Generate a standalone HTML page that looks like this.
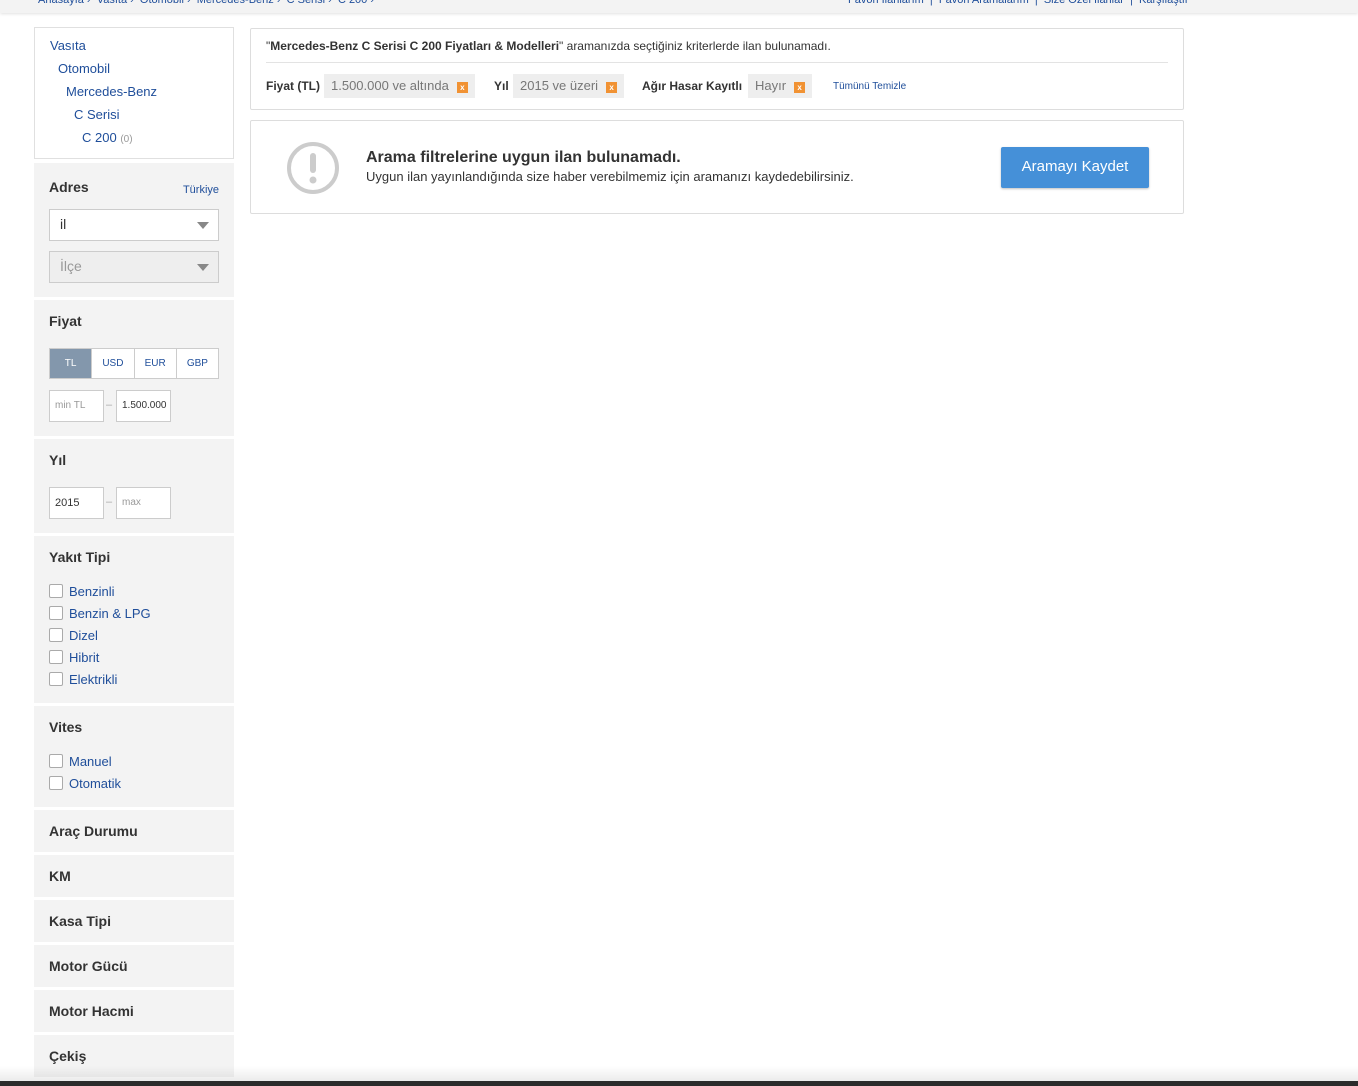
<!DOCTYPE html>
<html><head><meta charset="utf-8"><style>
*{box-sizing:border-box;margin:0;padding:0}
body{width:1358px;height:1086px;overflow:hidden;background:#fff;font-family:"Liberation Sans",sans-serif;position:relative;color:#333}
.abs{position:absolute}
a{color:#1f4e9a;text-decoration:none}
.top{left:0;top:0;width:1358px;height:13px;background:#f3f3f3;box-shadow:0 1px 3px rgba(0,0,0,.12)}
.top span{position:absolute;top:-6px;font-size:11px;color:#1f4e9a}
.cat{left:34px;top:27px;width:200px;height:132px;border:1px solid #e0e0e0;font-size:13px}
.cat a{position:absolute}
.sec{left:34px;width:200px;background:#f3f3f3}
.sec h3{position:absolute;left:15px;font-size:14px;font-weight:bold;color:#333}
.sel{position:absolute;left:15px;width:170px;height:32px;border:1px solid #ccc;background:#fff;font-size:14px;padding:6px 10px;color:#333}
.sel:after{content:"";position:absolute;right:9px;top:12px;border-left:6px solid transparent;border-right:6px solid transparent;border-top:7px solid #888}
.inp{position:absolute;width:55px;height:32px;border:1px solid #ccc;background:#fff;font-size:10px;padding:9px 5px;color:#999}
.cur{position:absolute;left:15px;top:48px;width:170px;height:31px;display:flex;border:1px solid #ccc;background:#fff}
.cur div{flex:1;text-align:center;font-size:10px;line-height:29px;color:#1f4e9a;border-left:1px solid #ccc}
.cur div:first-child{background:#8397ac;color:#fff;border:none}
.cb{position:absolute;left:15px;font-size:13px;color:#1f4e9a}
.cb i{display:inline-block;width:14px;height:14px;border:1px solid #aaa;background:#fff;border-radius:2px;vertical-align:-2px;margin-right:6px}
.box{left:250px;width:934px;border:1px solid #ddd;border-radius:2px}
.tag{position:absolute;top:45px;height:24px;background:#eee;font-size:13px;color:#777;padding:4px 7px;white-space:nowrap}
.x{display:inline-block;width:11px;height:11px;background:#f19233;color:#fff;font-size:8px;font-weight:bold;line-height:11px;text-align:center;margin-left:8px;vertical-align:0}
.lbl{position:absolute;top:50px;font-size:12px;font-weight:bold;color:#333;white-space:nowrap}
</style></head><body>
<div class="abs top">
<span style="left:38px">Anasayfa › &nbsp;Vasıta › &nbsp;Otomobil › &nbsp;Mercedes-Benz › &nbsp;C Serisi › &nbsp;C 200 ›</span>
<span style="left:848px">Favori İlanlarım &nbsp;| &nbsp;Favori Aramalarım &nbsp;| &nbsp;Size Özel İlanlar &nbsp;| &nbsp;Karşılaştır</span>
</div>

<div class="abs cat">
<a style="left:15px;top:10px">Vasıta</a>
<a style="left:23px;top:33px">Otomobil</a>
<a style="left:31px;top:56px">Mercedes-Benz</a>
<a style="left:39px;top:79px">C Serisi</a>
<a style="left:47px;top:102px">C 200 <span style="color:#999;font-size:10px">(0)</span></a>
</div>

<div class="abs sec" style="top:163px;height:134px">
<h3 style="top:16px">Adres</h3>
<a style="position:absolute;right:15px;top:21px;font-size:11px">Türkiye</a>
<div class="sel" style="top:46px">il</div>
<div class="sel" style="top:88px;background:#eee;color:#999">İlçe</div>
</div>

<div class="abs sec" style="top:300px;height:136px">
<h3 style="top:13px">Fiyat</h3>
<div class="cur"><div>TL</div><div>USD</div><div>EUR</div><div>GBP</div></div>
<div class="inp" style="left:15px;top:90px">min TL</div>
<span style="position:absolute;left:72px;top:99px;color:#aaa;font-size:11px">–</span>
<div class="inp" style="left:82px;top:90px;color:#333;padding:9px 5px">1.500.000</div>
</div>

<div class="abs sec" style="top:439px;height:94px">
<h3 style="top:13px">Yıl</h3>
<div class="inp" style="left:15px;top:48px;color:#333;font-size:11px">2015</div>
<span style="position:absolute;left:72px;top:57px;color:#aaa;font-size:11px">–</span>
<div class="inp" style="left:82px;top:48px">max</div>
</div>

<div class="abs sec" style="top:536px;height:167px">
<h3 style="top:13px">Yakıt Tipi</h3>
<div class="cb" style="top:48px"><i></i>Benzinli</div>
<div class="cb" style="top:70px"><i></i>Benzin &amp; LPG</div>
<div class="cb" style="top:92px"><i></i>Dizel</div>
<div class="cb" style="top:114px"><i></i>Hibrit</div>
<div class="cb" style="top:136px"><i></i>Elektrikli</div>
</div>

<div class="abs sec" style="top:706px;height:101px">
<h3 style="top:13px">Vites</h3>
<div class="cb" style="top:48px"><i></i>Manuel</div>
<div class="cb" style="top:70px"><i></i>Otomatik</div>
</div>

<div class="abs sec" style="top:810px;height:42px"><h3 style="top:13px">Araç Durumu</h3></div>
<div class="abs sec" style="top:855px;height:42px"><h3 style="top:13px">KM</h3></div>
<div class="abs sec" style="top:900px;height:42px"><h3 style="top:13px">Kasa Tipi</h3></div>
<div class="abs sec" style="top:945px;height:42px"><h3 style="top:13px">Motor Gücü</h3></div>
<div class="abs sec" style="top:990px;height:42px"><h3 style="top:13px">Motor Hacmi</h3></div>
<div class="abs sec" style="top:1035px;height:42px"><h3 style="top:13px">Çekiş</h3></div>

<div class="abs box" style="top:28px;height:82px">
<div style="position:absolute;left:15px;top:10px;font-size:12px;color:#333">"<b>Mercedes-Benz C Serisi C 200 Fiyatları &amp; Modelleri</b>" aramanızda seçtiğiniz kriterlerde ilan bulunamadı.</div>
<div style="position:absolute;left:15px;right:15px;top:33px;border-top:1px solid #e3e3e3"></div>
<div class="lbl" style="left:15px">Fiyat (TL)</div>
<div class="tag" style="left:73px">1.500.000 ve altında<span class="x">x</span></div>
<div class="lbl" style="left:243px">Yıl</div>
<div class="tag" style="left:262px">2015 ve üzeri<span class="x">x</span></div>
<div class="lbl" style="left:391px">Ağır Hasar Kayıtlı</div>
<div class="tag" style="left:497px">Hayır<span class="x">x</span></div>
<a style="position:absolute;left:582px;top:52px;font-size:10px">Tümünü Temizle</a>
</div>

<div class="abs box" style="top:120px;height:94px">
<svg style="position:absolute;left:35px;top:20px" width="54" height="54" viewBox="0 0 54 54"><circle cx="27" cy="27" r="24" fill="none" stroke="#ccc" stroke-width="4"/><rect x="24" y="12" width="6" height="20" rx="3" fill="#ccc"/><circle cx="27" cy="39" r="3.5" fill="#ccc"/></svg>
<div style="position:absolute;left:115px;top:28px;font-size:16px;font-weight:bold;color:#333">Arama filtrelerine uygun ilan bulunamadı.</div>
<div style="position:absolute;left:115px;top:48px;font-size:13px;color:#333">Uygun ilan yayınlandığında size haber verebilmemiz için aramanızı kaydedebilirsiniz.</div>
<div style="position:absolute;left:750px;top:26px;width:148px;height:41px;background:#4590d8;color:#fff;font-size:15px;text-align:center;line-height:39px;border-radius:2px;box-shadow:0 1px 2px rgba(0,0,0,.25)">Aramayı Kaydet</div>
</div>

<div class="abs" style="left:0;top:1066px;width:1358px;height:15px;background:linear-gradient(rgba(255,255,255,0),rgba(0,0,0,.08))"></div>
<div class="abs" style="left:0;top:1081px;width:1358px;height:5px;background:#2b2b2b"></div>
</body></html>
